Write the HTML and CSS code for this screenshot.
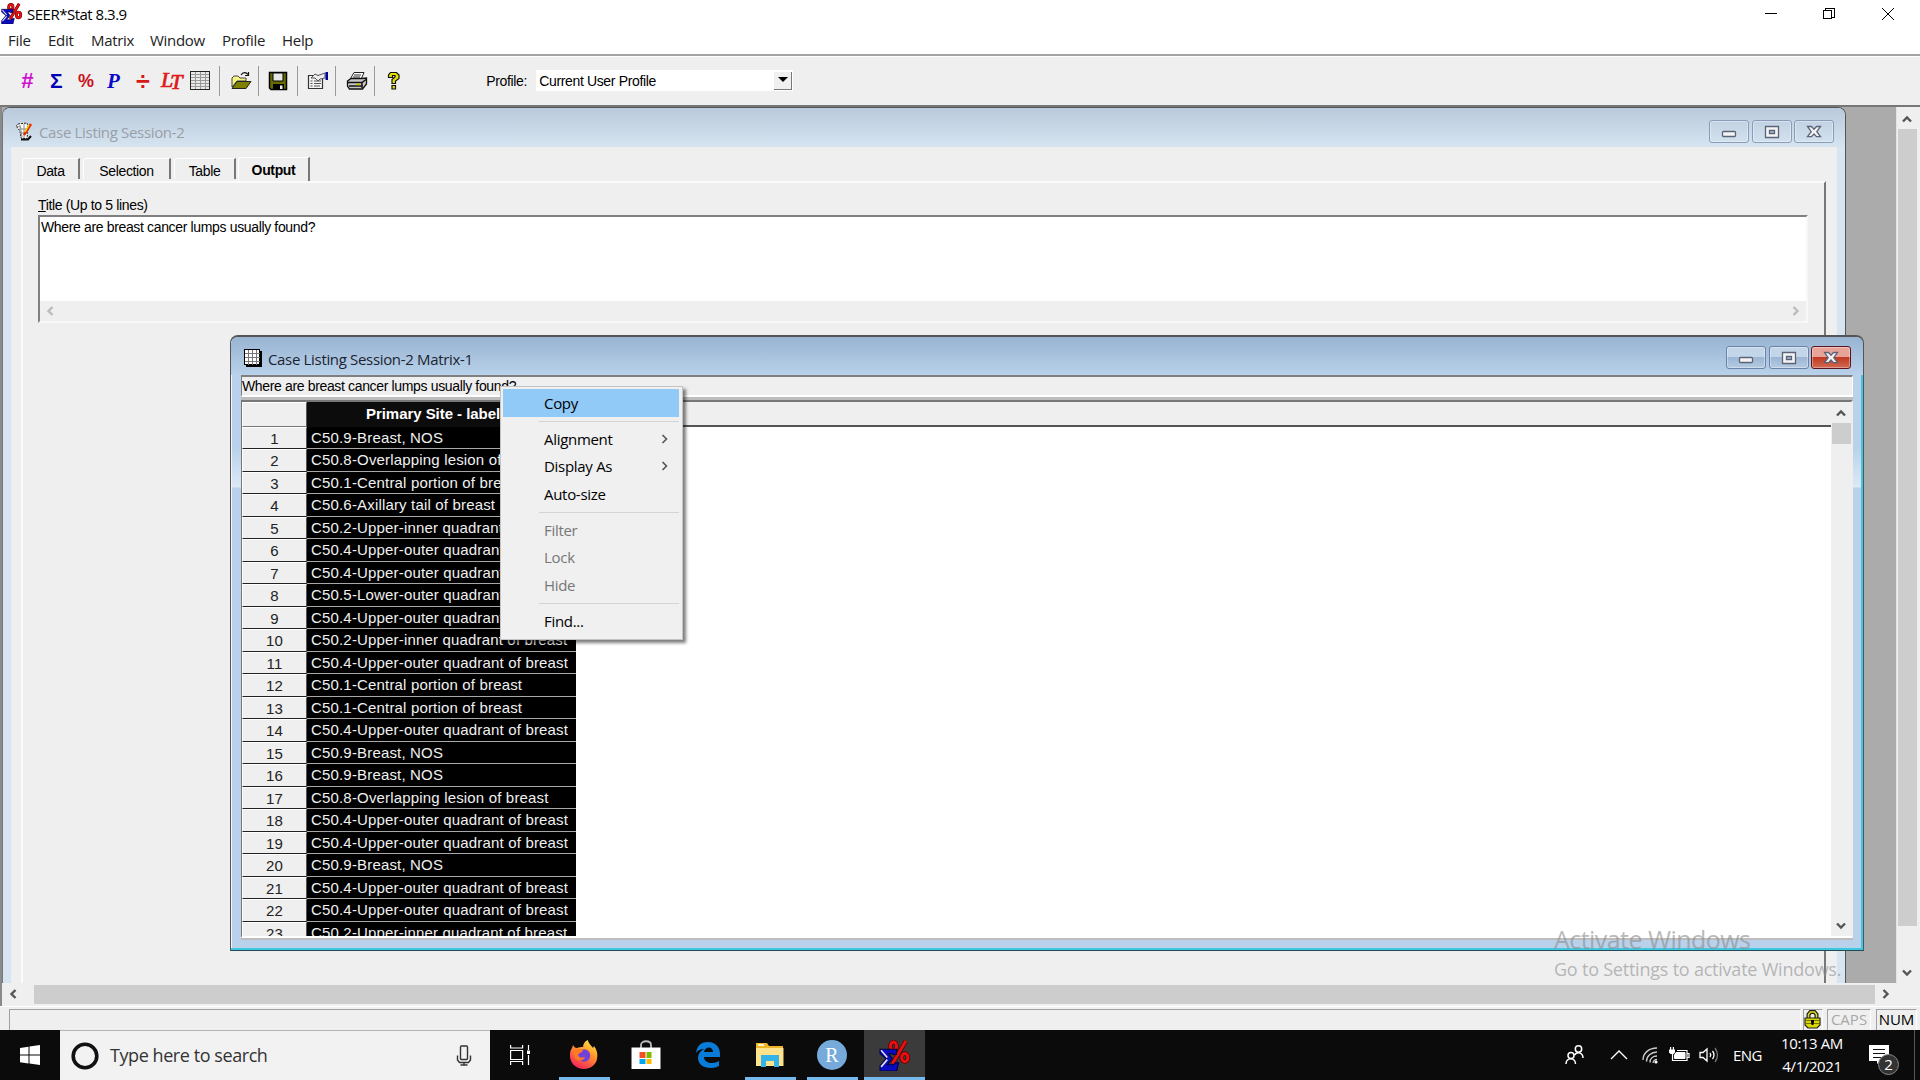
FILE: index.html
```html
<!DOCTYPE html>
<html lang="en">
<head>
  <meta charset="UTF-8">
  <meta name="viewport" content="width=device-width, initial-scale=1.0">
  <title>SEER*Stat 8.3.9</title>
  <link rel="stylesheet" href="styles.css">
</head>
<body>
  <!-- Shared symbols -->
  <svg class="defs" width="0" height="0">
    <symbol id="seer" viewBox="0 0 30 30">
      <g fill="none" stroke="#5c0000" stroke-width="4.200"><ellipse cx="14" cy="6" rx="3" ry="4"/><ellipse cx="25" cy="17" rx="3" ry="4"/><path d="M26 1L13 23"/></g>
      <g fill="none" stroke="#e81010" stroke-width="2.800"><ellipse cx="14" cy="6" rx="3" ry="4"/><ellipse cx="25" cy="17" rx="3" ry="4"/><path d="M26 1L13 23"/></g>
      <path d="M1 9h16v5h-3l-2-1H9l4 5-5 6h6l2-2h3l-2 8H1v-5l6-7-6-5z" fill="#0a0ac0" stroke="#000040"/>
      <path d="M2 10l6 7M2 26l6-7" stroke="#dde" stroke-width="1.6"/>
    </symbol>
    <symbol id="up" viewBox="0 0 10 8"><path d="M1 6.5L5 2.5 9 6.5" fill="none" stroke="currentColor" stroke-width="2.4"/></symbol>
    <symbol id="down" viewBox="0 0 10 8"><path d="M1 1.5L5 5.5 9 1.5" fill="none" stroke="currentColor" stroke-width="2.4"/></symbol>
    <symbol id="left" viewBox="0 0 8 10"><path d="M6.5 1L2.5 5 6.5 9" fill="none" stroke="currentColor" stroke-width="2.4"/></symbol>
    <symbol id="right" viewBox="0 0 8 10"><path d="M1.5 1L5.5 5 1.5 9" fill="none" stroke="currentColor" stroke-width="2.4"/></symbol>
    <symbol id="w-min" viewBox="0 0 16 14"><rect x="1.5" y="6.5" width="13" height="5" rx="1" fill="#f4f4f4" stroke="#5c6378" stroke-width="1.3"/></symbol>
    <symbol id="w-max" viewBox="0 0 16 14"><path d="M1.500 1.500h13v11h-13z" fill="#f4f4f4" stroke="#5c6378" stroke-width="1.3"/><path d="M5.500 5.500h5v3h-5z" fill="#a9bfdc" stroke="#5c6378" stroke-width="1.3"/></symbol>
    <symbol id="w-close" viewBox="0 0 16 14"><path d="M1.500 1.500h4L8 4.200l2.500-2.700h4L10.800 6.700l3.700 5h-4L8 9l-2.500 2.700h-4l3.700-5z" fill="#f4f4f4" stroke="#5c6378" stroke-width="1.3"/></symbol>
  </svg>

  <!-- Title bar -->
  <header class="titlebar">
    <svg class="app-icon" width="21" height="21"><use href="#seer"/></svg>
    <span class="app-title">SEER*Stat 8.3.9</span>
    <svg class="caption" width="136" height="14" fill="none" stroke="#000" shape-rendering="crispEdges">
      <path d="M0 6.500h12"/>
      <path d="M58.500 3.500h8v8h-8zM60.500 3v-1.500h9v9H67"/>
      <path d="M117 1l12 12M129 1l-12 12" shape-rendering="auto"/>
    </svg>
  </header>

  <nav class="menubar">
    <span class="m-file">File</span>
    <span class="m-edit">Edit</span>
    <span class="m-matrix">Matrix</span>
    <span class="m-window">Window</span>
    <span class="m-profile">Profile</span>
    <span>Help</span>
  </nav>

  <!-- Toolbar -->
  <div class="toolbar">
    <div class="tools">
      <span class="glyph hash">#</span>
      <span class="glyph sigma">Σ</span>
      <span class="glyph percent">%</span>
      <span class="glyph p">P</span>
      <span class="glyph divide">÷</span>
      <span class="glyph lt"><span class="lt-l">L</span>T</span>
      <svg class="t-grid" width="20" height="19" shape-rendering="crispEdges">
        <rect x=".5" y=".5" width="19" height="18" fill="#e9e9e9" stroke="#222"/>
        <path d="M5.500 1v17M10.500 1v17M15.500 1v17M1 3.500h18M1 6.500h18M1 9.500h18M1 12.500h18M1 15.500h18" stroke="#999"/>
      </svg>
    </div>
    <i class="sep"></i>
    <svg class="tool" width="22" height="20">
      <path d="M2 16V7l2-2h4l2 2h6v3H7z" fill="#f4f480" stroke="#444"/>
      <path d="M2 17.500l5-7h14l-5 7z" fill="#808000" stroke="#222"/>
      <path d="M11 4c2-3 5-3 7-.5M18.500 1v3.500H15" fill="none" stroke="#111" stroke-width="1.200"/>
    </svg>
    <i class="sep"></i>
    <svg class="tool" width="20" height="20">
      <path d="M1.500 1.500h17v17H3l-1.500-1.500z" fill="#6a6a00" stroke="#000" stroke-width="1.500"/>
      <path d="M5 2h10v8H5z" fill="#e8e8e8" stroke="#000"/>
      <path d="M5 13h11v6H5z" fill="#000"/><path d="M12 14.500h2.500V18H12z" fill="#eee"/>
    </svg>
    <i class="sep"></i>
    <svg class="tool" width="22" height="20">
      <path d="M1.500 4.500h14v13h-14z" fill="#f4f4f4" stroke="#333" stroke-width="1.200"/>
      <path d="M3.500 10h2M7 10h7M3.500 12.500h2M7 12.500h7M3.500 15h2M7 15h6" stroke="#555"/>
      <path d="M4 7l4-4 3 1.500L18 2v5l-5 1-2 2-3-3z" fill="#eee" stroke="#555"/>
      <path d="M18.500 1H21v8h-2.500z" fill="#0000a0"/>
    </svg>
    <i class="sep"></i>
    <svg class="tool" width="22" height="20">
      <path d="M8 1.500h10l-3 7H4z" fill="#fff" stroke="#222"/>
      <path d="M8 4h7M7 6h7" stroke="#333"/>
      <path d="M1.500 10L5 7.500h11L20.500 7v6l-4 5h-13l-2-3z" fill="#c8c8c8" stroke="#111" stroke-width="1.300"/>
      <path d="M2 11.500h14l4-3M3 15h13M16 12v5" fill="none" stroke="#111" stroke-width="1.500"/>
      <path d="M10 13.500h4" stroke="#c8c800" stroke-width="1.500"/>
    </svg>
    <i class="sep"></i>
    <svg class="tool help" width="14" height="20">
      <path d="M1.500 6.500V4l2-2.500h6L12 4v3.500L8.500 10v2.500H5V8.500L8 6V4.500H5.500v2z" fill="#e8e000" stroke="#111" stroke-width="1.200"/>
      <path d="M5 14.500h3.500V18H5z" fill="#e8e000" stroke="#111" stroke-width="1.200"/>
    </svg>
    <label class="profile-label">Profile:</label>
    <div class="combo">
      <span>Current User Profile</span>
      <span class="drop"><svg width="10" height="6"><path d="M0 0h10L5 5z"/></svg></span>
    </div>
  </div>

  <!-- MDI workspace -->
  <main class="workspace">
    <div class="mdi-row">
      <div class="mdi">

        <section class="win session">
          <div class="win-title">
            <svg class="win-icon" width="18" height="19">
              <path d="M3 2l9-1 1 5-1 11-6-1L5 9 1 4z" fill="#fff" stroke="#222" stroke-dasharray="2 1"/>
              <path d="M1 4l4 1M5 3l2 12M9 2v14M4 7h9M5 11h8" stroke="#888" fill="none"/>
              <path d="M16 2L9 13" stroke="#e03000" stroke-width="2.500"/><path d="M14 3l-4 7" stroke="#ffd000" stroke-width="1.500"/>
              <path d="M6 17.500h7l3-3.500" stroke="#111" stroke-width="2" fill="none"/>
            </svg>
            <span class="win-name">Case Listing Session-2</span>
            <span class="wbtn"><svg width="16" height="14"><use href="#w-min"/></svg></span>
            <span class="wbtn"><svg width="16" height="14"><use href="#w-max"/></svg></span>
            <span class="wbtn"><svg width="16" height="14"><use href="#w-close"/></svg></span>
          </div>
          <div class="session-client">
            <div class="tabs">
              <span class="tab t-data">Data</span>
              <span class="tab t-selection">Selection</span>
              <span class="tab t-table">Table</span>
              <span class="tab active">Output</span>
            </div>
            <div class="page">
              <div class="field-label"><u>T</u>itle (Up to 5 lines)</div>
              <div class="textarea">
                <div class="text">Where are breast cancer lumps usually found?</div>
                <div class="ta-scroll">
                  <svg width="8" height="10"><use href="#left"/></svg>
                  <svg width="8" height="10"><use href="#right"/></svg>
                </div>
              </div>
            </div>
          </div>
        </section>

        <section class="win matrix">
          <div class="win-title">
            <svg class="win-icon" width="18" height="18" shape-rendering="crispEdges">
              <path d="M2 2h16v16H2z" fill="#000"/>
              <path d="M.500 .500h15v15H.500z" fill="#fff" stroke="#000"/>
              <path d="M4.500 1v15M8.500 1v15M12.500 1v15M1 4.500h15M1 8.500h15M1 12.500h15" stroke="#777"/>
            </svg>
            <span class="win-name">Case Listing Session-2 Matrix-1</span>
            <span class="wbtn"><svg width="16" height="14"><use href="#w-min"/></svg></span>
            <span class="wbtn"><svg width="16" height="14"><use href="#w-max"/></svg></span>
            <span class="wbtn red"><svg width="16" height="14"><use href="#w-close"/></svg></span>
          </div>
          <div class="matrix-client">
            <div class="caption-line">Where are breast cancer lumps usually found?</div>
            <div class="sheet">
              <div class="grid">
                <div class="row head"><span class="num"></span><span class="cell">Primary Site - labeled</span><span class="rest"></span></div>
                <div class="row"><span class="num">1</span><span class="cell">C50.9-Breast, NOS</span></div>
                <div class="row"><span class="num">2</span><span class="cell">C50.8-Overlapping lesion of breast</span></div>
                <div class="row"><span class="num">3</span><span class="cell">C50.1-Central portion of breast</span></div>
                <div class="row"><span class="num">4</span><span class="cell">C50.6-Axillary tail of breast</span></div>
                <div class="row"><span class="num">5</span><span class="cell">C50.2-Upper-inner quadrant of breast</span></div>
                <div class="row"><span class="num">6</span><span class="cell">C50.4-Upper-outer quadrant of breast</span></div>
                <div class="row"><span class="num">7</span><span class="cell">C50.4-Upper-outer quadrant of breast</span></div>
                <div class="row"><span class="num">8</span><span class="cell">C50.5-Lower-outer quadrant of breast</span></div>
                <div class="row"><span class="num">9</span><span class="cell">C50.4-Upper-outer quadrant of breast</span></div>
                <div class="row"><span class="num">10</span><span class="cell">C50.2-Upper-inner quadrant of breast</span></div>
                <div class="row"><span class="num">11</span><span class="cell">C50.4-Upper-outer quadrant of breast</span></div>
                <div class="row"><span class="num">12</span><span class="cell">C50.1-Central portion of breast</span></div>
                <div class="row"><span class="num">13</span><span class="cell">C50.1-Central portion of breast</span></div>
                <div class="row"><span class="num">14</span><span class="cell">C50.4-Upper-outer quadrant of breast</span></div>
                <div class="row"><span class="num">15</span><span class="cell">C50.9-Breast, NOS</span></div>
                <div class="row"><span class="num">16</span><span class="cell">C50.9-Breast, NOS</span></div>
                <div class="row"><span class="num">17</span><span class="cell">C50.8-Overlapping lesion of breast</span></div>
                <div class="row"><span class="num">18</span><span class="cell">C50.4-Upper-outer quadrant of breast</span></div>
                <div class="row"><span class="num">19</span><span class="cell">C50.4-Upper-outer quadrant of breast</span></div>
                <div class="row"><span class="num">20</span><span class="cell">C50.9-Breast, NOS</span></div>
                <div class="row"><span class="num">21</span><span class="cell">C50.4-Upper-outer quadrant of breast</span></div>
                <div class="row"><span class="num">22</span><span class="cell">C50.4-Upper-outer quadrant of breast</span></div>
                <div class="row"><span class="num">23</span><span class="cell">C50.2-Upper-inner quadrant of breast</span></div>
              </div>
              <div class="sheet-scroll">
                <svg width="10" height="8"><use href="#up"/></svg>
                <div class="thumb"></div>
                <svg class="end" width="10" height="8"><use href="#down"/></svg>
              </div>
            </div>
          </div>
        </section>

        <!-- Right-click menu -->
        <div class="context-menu">
          <div class="item hot"><span class="mt-copy">Copy</span></div>
          <hr>
          <div class="item"><span>Alignment</span><svg width="8" height="10"><path d="M1.500 1L5.500 5 1.500 9" fill="none" stroke="#555" stroke-width="1.600"/></svg></div>
          <div class="item"><span>Display As</span><svg width="8" height="10"><path d="M1.500 1L5.500 5 1.500 9" fill="none" stroke="#555" stroke-width="1.600"/></svg></div>
          <div class="item"><span>Auto-size</span></div>
          <hr>
          <div class="item off"><span>Filter</span></div>
          <div class="item off"><span>Lock</span></div>
          <div class="item off"><span>Hide</span></div>
          <hr>
          <div class="item"><span>Find...</span></div>
        </div>
      </div>

      <div class="vscroll">
        <svg width="10" height="8"><use href="#up"/></svg>
        <div class="thumb"></div>
        <svg class="end" width="10" height="8"><use href="#down"/></svg>
      </div>
    </div>
    <div class="hscroll">
      <svg width="8" height="10"><use href="#left"/></svg>
      <div class="thumb"></div>
      <svg width="8" height="10"><use href="#right"/></svg>
    </div>
    <div class="watermark">
      <div class="wm-title">Activate Windows</div>
      <div class="wm-text">Go to Settings to activate Windows.</div>
    </div>
  </main>

  <div class="statusbar">
    <div class="pane message"></div>
    <div class="pane lock">
      <svg width="17" height="19">
        <path d="M4.500 8V4.500L6.500 2h4l2 2.500V8" fill="none" stroke="#222" stroke-width="4"/>
        <path d="M4.500 8V4.500L6.500 2h4l2 2.500V8" fill="none" stroke="#e0e020" stroke-width="1.500"/>
        <path d="M1 8h15v7l-3 3H4l-3-3z" fill="#d8d800" stroke="#222" stroke-width="1.200"/>
        <path d="M2 10.500h13M2 13.500h13" stroke="#777700"/><path d="M7 10h3v2L9.300 15H7.700L7 12z"/>
      </svg>
    </div>
    <div class="pane caps">CAPS</div>
    <div class="pane numlock">NUM</div>
  </div>

  <!-- Taskbar -->
  <footer class="taskbar">
    <div class="start">
      <svg width="20" height="20" fill="#fff"><path d="M0 3l8.500-1.200V9.500H0zM9.500 1.600L20 0v9.500H9.500zM0 10.500h8.500v7.900L0 17.200zM9.500 10.500H20V20L9.500 18.500z"/></svg>
    </div>
    <div class="search">
      <svg width="28" height="28"><circle cx="14" cy="14" r="11.800" fill="none" stroke="#111" stroke-width="3.600"/></svg>
      <span>Type here to search</span>
      <svg class="mic" width="16" height="21" fill="none" stroke="#333" stroke-width="1.400"><rect x="4.500" y="1" width="7" height="13.500" rx="1"/><path d="M1.500 10.500v4.500l2 2.500h9l2-2.500v-4.500M8 17.500V20M4.500 20h7"/></svg>
    </div>
    <div class="task view">
      <svg width="20" height="20" fill="none" stroke="#fff" stroke-width="1.200"><path d="M.600 5.500h12v9h-12zM.600 0v3h12V0M.600 20v-3.500h12V20M18.500 0v5M18.500 10v10"/><path d="M17 5.500h3v3.500h-3z" fill="#fff" stroke="none"/></svg>
    </div>
    <div class="task firefox">
      <svg width="30" height="30" viewBox="0 0 30 30">
        <defs>
          <linearGradient id="fx" x1=".8" y1="0" x2=".3" y2="1"><stop offset="0" stop-color="#ffe84a"/><stop offset=".4" stop-color="#ff9a2a"/><stop offset="1" stop-color="#f5205c"/></linearGradient>
        </defs>
        <path d="M4 5c1 2 2 3 4 3 2-1 4-1 6-1 0-3 2-6 5-7 0 3 3 5 5 8l1-2c3 4 4 8 3 13-1 6-7 10-13 10C7 29 1 23 1 16c0-3 0-5 2-8z" fill="url(#fx)"/>
        <circle cx="15" cy="15.500" r="6.200" fill="#7340d8"/>
        <path d="M4 11c4-3 7-2 10-1-1 3-4 3-5 5 1 3 4 3 7 2-1 4-7 5-10 1z" fill="#ff7a20"/>
      </svg>
    </div>
    <div class="task store">
      <svg width="30" height="30"><path d="M10 8V5c0-5 10-5 10 0v3" fill="none" stroke="#bbb" stroke-width="1.800"/><path d="M.500 7.500h29V29H.500z" fill="#fff"/><path d="M8.500 12h6v6h-6z" fill="#f25022"/><path d="M15.500 12h5v6h-5z" fill="#7fba00"/><path d="M8.500 19h6v5h-6z" fill="#00a4ef"/><path d="M15.500 19h5v5h-5z" fill="#ffb900"/></svg>
    </div>
    <div class="task edge">
      <svg width="26" height="28"><path d="M1 12C2 4 7 1 13 1c8 0 12 6 12 12v3H9c0 4 4 6 8 6 3 0 5-1 7-2v5c-2 1-5 2-8 2C8 27 3 23 3 17c0-4 2-7 6-9-4 0-7 2-8 4zM9 11h9c0-6-8-6-9 0z" fill="#0a7bd8"/></svg>
    </div>
    <div class="task explorer">
      <svg width="28" height="26"><path d="M0 2V1h11l2 3h14v19H0z" fill="#f0b429"/><path d="M0 6h27.500v18H0z" fill="#ffe28c"/><path d="M2 2h6v2H2z" fill="#fff3c4"/><path d="M5 25V13h18v12h-5v-6h-8v6z" fill="#35b2e8"/></svg>
    </div>
    <div class="task rstat">
      <svg width="30" height="30"><circle cx="15" cy="15" r="15" fill="#75aadb"/><text x="15" y="21.500" text-anchor="middle" font-family="Liberation Serif" font-size="20" fill="#fff">R</text></svg>
    </div>
    <div class="task seerstat">
      <svg width="31" height="31"><use href="#seer"/></svg>
    </div>

    <div class="tray">
      <svg class="people" width="20" height="20" fill="none" stroke="#fff" stroke-width="1.500"><circle cx="13.500" cy="4" r="3.200"/><circle cx="6" cy="10.500" r="3"/><path d="M1 19c0-7 9.500-7 9.500 0M9.500 10c3-4 8.500-2 8.500 3"/></svg>
      <svg class="caret" width="18" height="10" fill="none" stroke="#fff" stroke-width="1.400"><path d="M1 9l8-8 8 8"/></svg>
      <svg class="wifi" width="18" height="18" fill="none" stroke="#ccc" stroke-width="1.400"><path d="M1 14C1 7 7 2 15 2M4.500 15.500C4.500 10 9 6 15 6M8 16.500c0-4 3-6.500 7-6.500M11 17c0-2 2-3.500 4-3.500"/><circle cx="14" cy="16" r="1.600" fill="#fff" stroke="none"/></svg>
      <svg class="battery" width="21" height="16"><path d="M7 5.500h9v6H5.500V8z" fill="#fff" stroke="#fff"/><path d="M3.500 7v6.500h14.500V3.500H8M18 6.500h2v4h-2" fill="none" stroke="#fff" stroke-width="1.200"/><path d="M0 2.500h6v3L4.500 7h-3L0 5.500zM1 0h1.200v3H1zM3.800 0H5v3H3.800z" fill="#fff"/></svg>
      <svg class="sound" width="21" height="18" fill="none" stroke="#fff" stroke-width="1.300"><path d="M1 6.500h3L8 3v12l-4-3.500H1zM11 7q1.500 2 0 4M13.500 5q3 4 0 8"/><path d="M16 2q5 7 0 14" stroke="#777"/></svg>
      <span class="lang">ENG</span>
      <div class="clock"><div>10:13 AM</div><div>4/1/2021</div></div>
      <div class="notify">
        <svg width="20" height="20"><path d="M0 0h20v16h-9l-3 3v-3H0z" fill="#fff"/><path d="M4 4.500h12M4 8.500h12M4 12.500h8" stroke="#111" stroke-width="1.200"/></svg>
        <span class="badge">2</span>
      </div>
    </div>
  </footer>
</body>
</html>
```
FILE: styles.css
```css
* {
  box-sizing: border-box;
}
body {
  margin: 0;
  width: 1920px;
  height: 1080px;
  overflow: hidden;
  display: flex;
  flex-direction: column;
  background: #fff;
  color: #000;
  font-family: "Open Sans", "Noto Sans", sans-serif;
  font-size: 15px;
  white-space: nowrap;
}
svg {
  display: block;
  flex: none;
}
.defs {
  position: absolute;
}

/* title + menu */
.titlebar {
  height: 28px;
  display: flex;
  align-items: center;
  padding: 0 19px 0 1px;
}
.app-icon {
  margin-top: -1px;
}
.app-title {
  margin-left: 5px;
  letter-spacing: -0.5px;
}
.caption {
  margin-left: auto;
}
.menubar {
  height: 26px;
  display: flex;
  align-items: center;
  padding: 0 0 2px 8px;
  color: #222;
  letter-spacing: -0.3px;
}
.m-file { width: 40px; }
.m-edit { width: 43px; }
.m-matrix { width: 59px; }
.m-window { width: 72px; }
.m-profile { width: 60px; }

/* toolbar */
.toolbar {
  height: 53px;
  display: flex;
  align-items: center;
  padding-left: 20px;
  background: #efefef;
  border-top: 2px solid #a3a3a3;
  border-bottom: 2px solid #777;
  box-shadow: inset 0 1px 0 #fff;
}
.tools {
  display: flex;
  align-items: center;
  width: 199px;
}
.glyph {
  width: 29px;
  line-height: 20px;
  font-family: "Liberation Sans", sans-serif;
  font-size: 20px;
  font-weight: bold;
}
.hash { color: #d010d0; padding-left: 1px; font-size: 22px; font-style: italic; }
.sigma { color: #0000b8; font-size: 21px; padding-left: 1px; }
.percent { color: #c81018; font-size: 18px; letter-spacing: -2px; }
.p { color: #0a0ac8; font-family: "Liberation Serif", serif; font-style: italic; font-size: 21px; }
.divide { color: #d81818; font-size: 25px; }
.lt {
  width: 29px;
  margin-left: -4px;
  color: #e01818;
  font-family: "Liberation Serif", serif;
  font-style: italic;
  font-weight: normal;
  -webkit-text-stroke: 0.7px #e01818;
  font-size: 22px;
  letter-spacing: -3px;
}
.lt-l {
  vertical-align: 2px;
}
.sep {
  width: 1px;
  height: 30px;
  background: #999;
}
.tool {
  margin-left: 9.5px;
  margin-right: 6.3px;
  width: 22px;
}
.help {
  margin-left: 12px;
  margin-right: 12px;
  width: 14px;
}
.profile-label,
.combo {
  font-family: "Liberation Sans", sans-serif;
  font-size: 14px;
  letter-spacing: -0.35px;
}
.profile-label {
  width: 50px;
  margin-left: 73px;
}
.combo {
  width: 257px;
  height: 21px;
  display: flex;
  align-items: center;
  justify-content: space-between;
  padding: 0 1px 0 3px;
  background: #fff;
}
.drop {
  width: 18px;
  height: 18px;
  display: flex;
  align-items: center;
  justify-content: center;
  background: #f0f0f0;
  border-right: 1px solid #777;
  border-bottom: 1px solid #777;
}

/* workspace */
.workspace {
  position: relative;
  height: 899px;
  display: flex;
  flex-direction: column;
  border-left: 2px solid #8a8a8a;
  background: #efefef;
}
.mdi-row {
  height: 876px;
  display: flex;
}
.mdi {
  position: relative;
  width: 1894px;
  overflow: hidden;
  background: #ababab;
}
.vscroll {
  width: 24px;
  display: flex;
  flex-direction: column;
  align-items: center;
  padding: 8px 4px 6px 1px;
  background: #efefef;
  border-left: 1px solid #e3e3e3;
  color: #555;
}
.vscroll .thumb {
  width: 19px;
  height: 797px;
  margin-top: 6px;
  background: #cdcdcd;
}
.end {
  margin-top: auto;
}
.hscroll {
  height: 23px;
  display: flex;
  align-items: center;
  padding: 0 0 1px 7px;
  color: #555;
}
.hscroll .thumb {
  width: 1841px;
  height: 19px;
  margin: 0 7px 0 17px;
  background: #cdcdcd;
}

/* child windows */
.win {
  position: absolute;
  display: flex;
  flex-direction: column;
  border-radius: 8px 8px 0 0;
}
.win-title {
  display: flex;
  align-items: center;
  letter-spacing: -0.33px;
}
.win-name {
  margin-left: 6px;
  margin-right: auto;
}
.wbtn {
  width: 40px;
  height: 23px;
  margin-left: 2.5px;
  display: flex;
  align-items: center;
  justify-content: center;
  border: 1px solid #8b9cbb;
  border-radius: 3px;
  box-shadow: inset 0 0 0 1px rgba(255, 255, 255, .35);
}
.session {
  left: 0;
  top: 0;
  width: 1844px;
  height: 900px;
  border: 1px solid #555;
  border-left-color: #777;
  background: #d7e4f1;
}
.session .win-title {
  height: 39px;
  padding: 8px 11px 0 12px;
  color: #9a9fa6;
  border-radius: 7px 7px 0 0;
  background: linear-gradient(#b9cadb, #d6e4f1);
}
.session-client {
  flex: 1;
  margin: 0 8px;
  padding: 10px 10px 0 10px;
  background: #efefef;
}
.tabs {
  height: 24px;
  display: flex;
  align-items: flex-end;
}
.tab,
.page,
.caption-line {
  font-family: "Liberation Sans", sans-serif;
  font-size: 14px;
  letter-spacing: -0.35px;
}
.tab {
  height: 21px;
  margin: 0 2px 2px 1px;
  line-height: 24px;
  text-align: center;
  border-top: 1px solid #fff;
  border-left: 1px solid #fff;
  border-right: 2px solid #777;
  border-radius: 4px 0 0 0;
}
.t-data { width: 58px; }
.t-selection { width: 88px; }
.t-table { width: 62px; }
.tab.active {
  width: 72px;
  height: 24px;
  margin: 0;
  font-weight: bold;
}
.page {
  width: 1805px;
  height: 820px;
  padding: 15px 0 0 15px;
  border-top: 2px solid #fbfbfb;
  border-left: 2px solid #fbfbfb;
  border-right: 2px solid #777;
}
.field-label {
  height: 17px;
  line-height: 15px;
}
.textarea {
  width: 1770px;
  height: 108px;
  display: flex;
  flex-direction: column;
  background: #fff;
  border: 2px solid #808080;
  border-right-color: #f8f8f8;
  border-bottom-color: #f8f8f8;
}
.text {
  flex: 1;
  padding-left: 1px;
  line-height: 20px;
}
.ta-scroll {
  height: 20px;
  display: flex;
  align-items: center;
  justify-content: space-between;
  padding: 0 6px 0 6px;
  background: #efefef;
  color: #bbb;
}

/* matrix window */
.matrix {
  left: 228px;
  top: 228px;
  width: 1634px;
  height: 616px;
  border: 2px solid #555;
  border-left-width: 1px;
  border-right-width: 1px;
  border-bottom: 1px solid #264a55;
  background: linear-gradient(#b9d1ea 110px, #dce9f6 150px, #b9d1ea 151px);
  box-shadow: inset -2px -2px 0 #3cc8e0, inset 1px 1px 0 #f4f8fc;
}
.matrix .win-title {
  height: 38px;
  padding: 7px 12px 2px 13px;
  color: #1c2430;
  border-radius: 7px 7px 0 0;
  background: linear-gradient(#98b4d2, #b9d1ea);
}
.matrix .win-icon {
  margin-top: -2px;
}
.matrix .wbtn {
  margin-top: -2px;
  border-color: #6c83a8;
  background: linear-gradient(#c3d5e8 48%, #9db6d2 50%, #b5cbe3);
}
.matrix .wbtn.red {
  border-color: #5a1420;
  background: linear-gradient(#e8a398 48%, #bf3a22 50%, #d36a52);
}
.matrix-client {
  margin: 0 10px;
  height: 565px;
  display: flex;
  flex-direction: column;
  background: #bdbdbd;
}
.caption-line {
  height: 22px;
  line-height: 18px;
  background: #efefef;
  border: 1px solid #808080;
  border-top-width: 2px;
  border-right-color: #fff;
  border-bottom: 2px solid #fff;
}
.sheet {
  height: 538px;
  margin-top: 3px;
  display: flex;
  background: #fff;
  border: 1px solid #777;
  border-top-width: 2px;
  border-right: 2px solid #eee;
  border-bottom: 2px solid #fff;
}
.grid {
  flex: 1;
  overflow: hidden;
  font-family: "Liberation Sans", sans-serif;
  font-size: 15px;
  letter-spacing: 0.17px;
}
.row {
  height: 22.52px;
  display: flex;
  line-height: 22px;
}
.num {
  width: 65px;
  text-align: center;
  color: #222;
  background: #efefef;
  border-top: 1px solid #fff;
  border-left: 1px solid #fff;
  border-right: 1px solid #555;
  border-bottom: 1px solid #222;
}
.cell {
  width: 269px;
  padding-left: 4px;
  color: #f0f0f0;
  background: #000;
  border-bottom: 1px solid #a8a8a8;
}
.row:not(.head) .num {
  line-height: 21px;
}
.head {
  height: 24.5px;
  font-weight: bold;
  letter-spacing: -0.05px;
}
.head .num {
  border-bottom-color: #777;
}
.head .cell {
  padding-left: 59px;
  line-height: 24px;
  color: #fff;
  background: #0c0c0c;
  border-bottom: none;
}
.rest {
  flex: 1;
  background: #efefef;
  border-bottom: 2px solid #555;
}
.sheet-scroll {
  width: 20px;
  display: flex;
  flex-direction: column;
  align-items: center;
  padding: 7px 0 6px;
  background: #efefef;
  color: #555;
}
.sheet-scroll .thumb {
  width: 19px;
  height: 21px;
  margin-top: 6px;
  background: #cdcdcd;
}

/* context menu */
.context-menu {
  position: absolute;
  left: 498px;
  top: 279px;
  width: 183px;
  height: 254px;
  padding: 2px;
  background: #f0f0f0;
  border: 1px solid #c4c4c4;
  box-shadow: 3px 3px 3px rgba(0, 0, 0, .5);
  letter-spacing: -0.3px;
}
.item {
  height: 27.5px;
  display: flex;
  align-items: center;
  justify-content: space-between;
  padding: 0 10px 0 41px;
  margin-right: 1px;
}
.hot {
  background: #91c9f7;
}
.off {
  color: #777;
}
.context-menu hr {
  height: 1px;
  margin: 4px 1px 3.5px 36px;
  border: none;
  background: #d4d4d4;
}

.watermark {
  position: absolute;
  left: 1552px;
  top: 815px;
  color: rgba(140, 140, 140, .6);
}
.wm-title {
  font-size: 25px;
  line-height: 35px;
  letter-spacing: -0.55px;
}
.wm-text {
  font-size: 18px;
  line-height: 25px;
  letter-spacing: -0.22px;
}

/* status bar */
.statusbar {
  height: 24px;
  display: flex;
  padding: 2px 3px 1px 9px;
  background: #efefef;
  border-top: 1px solid #fff;
}
.pane {
  height: 21px;
  margin-right: 5px;
  line-height: 18px;
  text-align: center;
  border-top: 1px solid #a0a0a0;
  border-left: 1px solid #a0a0a0;
  border-right: 1px solid #fff;
}
.message { width: 1793px; margin-right: 2px; }
.lock { width: 20px; margin-right: 4px; }
.caps { width: 44px; color: #a8a8a8; }
.numlock { width: 41px; margin: 0; }

/* taskbar */
.taskbar {
  height: 50px;
  display: flex;
  background: #0b0b0b;
  color: #fff;
}
.start {
  width: 60px;
  display: flex;
  align-items: center;
  justify-content: center;
}
.search {
  width: 430px;
  display: flex;
  align-items: center;
  padding: 0 18px 0 11px;
  color: #333;
  background: #f2f2f2;
  border-top: 1px solid #b5b5b5;
  font-size: 18px;
  letter-spacing: -0.43px;
}
.search span {
  margin: -2px 0 0 11px;
}
.mic {
  margin-left: auto;
}
.task {
  display: flex;
  align-items: center;
  justify-content: center;
  border-bottom: 3px solid transparent;
  padding-top: 3px;
}
.view { width: 60px; }
.firefox { width: 51px; margin-left: 9px; border-color: #76b9ed; }
.store { width: 51px; margin: 0 11px 0 10px; }
.edge { width: 51px; margin-right: 12px; }
.explorer { width: 51px; border-color: #76b9ed; }
.rstat { width: 51px; margin: 0 6px 0 11px; border-color: #76b9ed; }
.seerstat { width: 61px; border-color: #76b9ed; background: #3b3b3b; }
.firefox svg,
.explorer svg,
.rstat svg,
.seerstat svg {
  margin-right: 1px;
}
.tray {
  margin-left: auto;
  width: 355px;
  display: flex;
  align-items: center;
}
.people { width: 20px; }
.caret { margin-left: 25px; }
.wifi { margin-left: 14px; }
.battery { margin-left: 9px; }
.sound { margin-left: 9px; }
.lang {
  width: 30px;
  margin-left: 13px;
  letter-spacing: -0.6px;
}
.clock {
  width: 80px;
  margin-left: 9px;
  text-align: center;
  line-height: 23px;
  letter-spacing: -0.4px;
}
.notify {
  position: relative;
  width: 46px;
  height: 50px;
  margin-left: 17px;
  padding-top: 15px;
  border-right: 1px solid #555;
}
.badge {
  position: absolute;
  left: 9px;
  top: 24px;
  width: 21px;
  height: 21px;
  line-height: 19px;
  text-align: center;
  border-radius: 50%;
  border: 1px solid #888;
  background: #333;
}
```
